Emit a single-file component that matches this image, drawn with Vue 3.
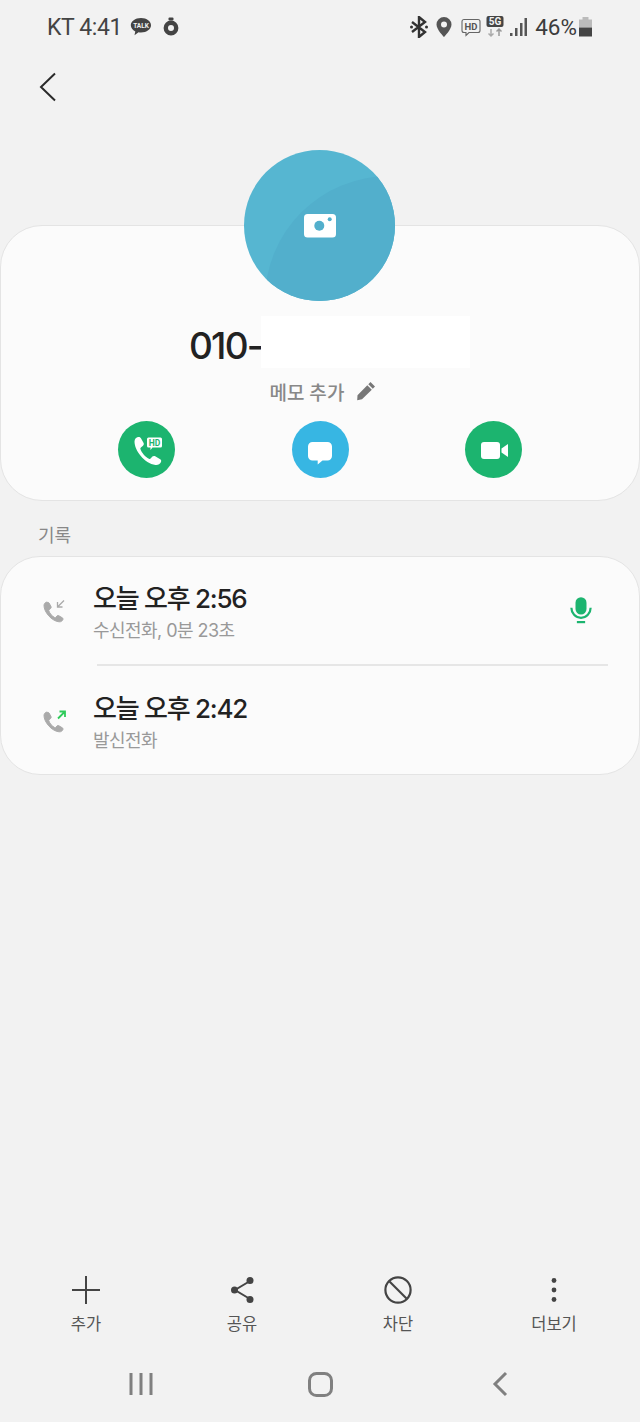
<template>
  <div class="phone">
    <header class="status">
      <div class="status-left">
        <span class="carrier">KT 4:41</span>
        <svg class="talk" width="22" height="20" viewBox="0 0 22 20">
          <path d="M11 1C5.200 1 .8 4.300 .8 8.300c0 2.600 1.800 4.800 4.500 6.100l-.8 3.800 4-2.900c.8.100 1.600.2 2.500.2 5.800 0 10-3.300 10-7.200S16.800 1 11 1z" fill="#444" />
          <text x="11" y="10.800" text-anchor="middle" class="talk-text">TALK</text>
        </svg>
        <svg class="timer" width="16" height="20" viewBox="0 0 16 20">
          <rect x="5.500" y="0.500" width="5" height="3" rx="1" fill="#444" />
          <circle cx="8" cy="11" r="5.200" fill="none" stroke="#444" stroke-width="4.400" />
        </svg>
      </div>
      <div class="status-right">
        <svg width="18" height="22" viewBox="0 0 18 22" fill="none" stroke="#333" stroke-width="2.400">
          <path d="M2 6l13 10-6 5V1l6 5L2 16" />
          <circle cx="1.500" cy="11" r="1.500" fill="#333" stroke="none" />
          <circle cx="16.500" cy="11" r="1.500" fill="#333" stroke="none" />
        </svg>
        <svg class="pin" width="16" height="20" viewBox="0 0 16 20">
          <path fill-rule="evenodd" d="M8 0a7.500 7.500 0 0 0-7.500 7.500C.5 12.500 8 20 8 20s7.500-7.500 7.500-12.500A7.500 7.500 0 0 0 8 0zm0 4.500a3 3 0 1 1 0 6 3 3 0 0 1 0-6z" fill="#555" />
        </svg>
        <svg class="hd" width="20" height="20" viewBox="0 0 20 20">
          <path d="M3 2.500h14a2 2 0 0 1 2 2v9a2 2 0 0 1-2 2H8l-3 3v-3H3a2 2 0 0 1-2-2v-9a2 2 0 0 1 2-2z" fill="none" stroke="#666" stroke-width="1.100" />
          <text x="10" y="12.500" text-anchor="middle" class="hd-text">HD</text>
        </svg>
        <svg class="five" width="18" height="22" viewBox="0 0 18 22">
          <rect x="0.500" y="0" width="17" height="11" rx="2" fill="#444" />
          <text x="9" y="9.300" text-anchor="middle" class="five-text">5G</text>
          <path d="M5 13v7M2.500 17.500L5 20l2.500-2.500" fill="none" stroke="#aaa" stroke-width="1.500" />
          <path d="M13 20v-7M10.500 15.500L13 13l2.500 2.500" fill="none" stroke="#999" stroke-width="1.500" />
        </svg>
        <svg class="signal" width="17" height="19" viewBox="0 0 17 19" fill="#555">
          <rect x="0" y="15" width="2.500" height="3" />
          <rect x="5" y="10" width="2.500" height="8" />
          <rect x="10" y="5" width="2.500" height="13" />
          <rect x="14.500" y="0" width="2.500" height="18" />
        </svg>
        <span class="percent">46%</span>
        <svg class="battery" width="13" height="20" viewBox="0 0 13 20">
          <rect x="3.500" y="0" width="6" height="3" fill="#bbb" />
          <rect x="0" y="2.500" width="13" height="8" fill="#bbb" />
          <rect x="0" y="10.500" width="13" height="9" fill="#444" />
        </svg>
      </div>
    </header>

    <button class="back">
      <svg width="18" height="30" viewBox="0 0 18 30" fill="none" stroke="#2a2a2a" stroke-width="2">
        <path d="M16 1.500L2 15l14 13.500" />
      </svg>
    </button>

    <section class="profile">
      <div class="avatar">
        <svg width="151" height="151" viewBox="0 0 151 151">
          <defs>
            <clipPath id="avatar-clip">
              <circle cx="75.500" cy="75.500" r="75.500" />
            </clipPath>
          </defs>
          <circle cx="75.500" cy="75.500" r="75.500" fill="#56b6d1" />
          <circle cx="145" cy="150" r="124" fill="#52afcc" clip-path="url(#avatar-clip)" />
          <rect x="60" y="64" width="32" height="23.500" rx="3.500" fill="#fff" />
          <circle cx="75.300" cy="75.700" r="5" fill="#52afcc" />
          <circle cx="85.700" cy="69.300" r="2" fill="#52afcc" />
        </svg>
      </div>
      <div class="number">
        <span class="num-text">010-</span>
        <span class="mask"></span>
      </div>
      <div class="memo">
        <span>메모 추가</span>
        <svg width="20" height="20" viewBox="0 0 20 20" fill="#777">
          <path d="M14.500 1l4.500 4.500-2.200 2.200-4.500-4.500zM11.300 4.200l4.500 4.500-9.800 9.600-4.800 1 .3-5.100z" />
        </svg>
      </div>
      <div class="actions">
        <button class="round green">
          <svg width="56" height="56" viewBox="0 0 56 56">
            <path d="M19 15c-1.500.3-3.500 1.800-3.500 4.500 0 9 10 22 21 23.500 2.500.3 4.500-1 5.500-3 .5-1.200.2-2-.8-2.700l-5-3c-1-.6-2-.5-2.800.3l-1.800 2c-.5.500-1 .5-1.700.2-3.500-1.800-7.200-6-8.500-9.800-.2-.7 0-1.200.5-1.600l2.100-1.700c.8-.7 1-1.700.6-2.700l-2.800-5c-.5-.8-1.500-1.300-2.800-1z" fill="#fff" />
            <path d="M29.500 15.500h12a1.500 1.500 0 0 1 1.500 1.500v7a1.500 1.500 0 0 1-1.500 1.500h-8l-2 2.500v-2.500h-2a1.500 1.500 0 0 1-1.500-1.500v-7a1.500 1.500 0 0 1 1.500-1.500z" fill="#fff" />
            <text x="35.500" y="23.800" text-anchor="middle" class="hd-badge">HD</text>
          </svg>
        </button>
        <button class="round blue">
          <svg width="56" height="56" viewBox="0 0 56 56">
            <path d="M20.500 20h15a4.500 4.500 0 0 1 4.500 4.500v9.500a4.500 4.500 0 0 1-4.500 4.500h-5l-4.800 4v-4h-5.200a4.500 4.500 0 0 1-4.500-4.500v-9.500a4.500 4.500 0 0 1 4.500-4.500z" fill="#fff" />
          </svg>
        </button>
        <button class="round green">
          <svg width="56" height="56" viewBox="0 0 56 56">
            <rect x="15" y="20" width="19" height="17" rx="3" fill="#fff" />
            <path d="M35.500 26.500l6.500-4.500v13L35.500 30.500z" fill="#fff" />
          </svg>
        </button>
      </div>
    </section>

    <div class="log-label">기록</div>

    <section class="log">
      <div v-for="(call, i) in calls" :key="call.time" class="log-row" :class="{ first: i === 0 }">
        <svg class="call-icon" width="26" height="26" viewBox="0 0 26 26">
          <path d="M5 5c-1.500.3-3 1.600-3 3.500 0 6.500 7.500 15.500 15 16.300 2 .2 3.300-.8 3.900-2.200.3-.8.100-1.300-.6-1.800l-3.400-2c-.7-.4-1.300-.3-1.900.2l-1.200 1.400c-.4.300-.7.300-1.200.1-2.400-1.200-4.900-4.100-5.800-6.700-.1-.5 0-.8.400-1.100l1.400-1.200c.6-.5.700-1.200.4-1.900l-1.900-3.500c-.4-.6-1-.9-2-.8z" fill="#aaa" stroke="#aaa" stroke-width="1" />
          <path v-if="call.out" d="M16 11.500L23 4.500M17.500 4.500h5.500V10" fill="none" stroke="#2ecb5a" stroke-width="1.800" />
          <path v-else d="M22 3.500L15.500 10M15.500 5v5h5" fill="none" stroke="#aaa" stroke-width="1.300" />
        </svg>
        <div class="log-text">
          <div class="log-time">{{ call.time }}</div>
          <div class="log-sub">{{ call.sub }}</div>
        </div>
        <svg v-if="call.rec" class="mic" width="22" height="28" viewBox="0 0 24 30">
          <rect x="6" y="1" width="12" height="19" rx="6" fill="#1cb46f" />
          <path d="M1.500 12.500c0 6 4.500 11 10.500 11s10.500-5 10.500-11" fill="none" stroke="#1cb46f" stroke-width="2.400" />
          <rect x="7.500" y="27" width="9" height="2.400" fill="#1cb46f" />
        </svg>
      </div>
    </section>

    <nav class="tools">
      <div class="tool">
        <svg width="30" height="30" viewBox="0 0 30 30" stroke="#444" stroke-width="2" fill="none">
          <path d="M15 1v28M1 15h28" />
        </svg>
        <span>추가</span>
      </div>
      <div class="tool">
        <svg width="30" height="30" viewBox="0 0 30 30" fill="#444" stroke="#444">
          <path d="M23 6L8 15l15 9" fill="none" stroke-width="2" />
          <circle cx="23" cy="5.500" r="3.500" stroke="none" />
          <circle cx="7.500" cy="15" r="3.500" stroke="none" />
          <circle cx="23" cy="24.500" r="3.500" stroke="none" />
        </svg>
        <span>공유</span>
      </div>
      <div class="tool">
        <svg width="30" height="30" viewBox="0 0 30 30" fill="none" stroke="#444" stroke-width="2.200">
          <circle cx="15" cy="15" r="12.600" />
          <path d="M6.500 6.500l17 17" />
        </svg>
        <span>차단</span>
      </div>
      <div class="tool">
        <svg width="30" height="30" viewBox="0 0 30 30" fill="#444">
          <circle cx="15" cy="5.500" r="2.400" />
          <circle cx="15" cy="15" r="2.400" />
          <circle cx="15" cy="24.500" r="2.400" />
        </svg>
        <span>더보기</span>
      </div>
    </nav>

    <footer class="nav">
      <svg class="recents" width="24" height="24" viewBox="0 0 24 24" fill="#808080">
        <rect x="0.500" y="1" width="3" height="22" />
        <rect x="10.500" y="1" width="3" height="22" />
        <rect x="20.500" y="1" width="3" height="22" />
      </svg>
      <svg width="25" height="25" viewBox="0 0 25 25" fill="none" stroke="#808080" stroke-width="3">
        <rect x="1.500" y="1.500" width="22" height="22" rx="7" />
      </svg>
      <svg width="16" height="26" viewBox="0 0 16 26" fill="none" stroke="#808080" stroke-width="3">
        <path d="M14 2L3 13l11 11" />
      </svg>
    </footer>
  </div>
</template>

<script setup>
const calls = [
  { time: "오늘 오후 2:56", sub: "수신전화, 0분 23초", out: false, rec: true },
  { time: "오늘 오후 2:42", sub: "발신전화", out: true, rec: false }
];
</script>

<style scoped>
.phone {
  width: 640px;
  height: 1422px;
  background: #f2f2f2;
  display: flex;
  flex-direction: column;
  font-family: "Noto Sans CJK KR", "Noto Sans", sans-serif;
  overflow: hidden;
}

.status {
  height: 54px;
  padding: 0 48px 0 47px;
  display: flex;
  align-items: center;
  justify-content: space-between;
}

.status-left,
.status-right {
  display: flex;
  align-items: center;
}

.carrier {
  font-family: "Roboto", sans-serif;
  font-size: 23px;
  letter-spacing: -0.400px;
  color: #444;
  margin-right: 8px;
}

.timer {
  margin-left: 11px;
}

.talk-text {
  font: 700 6.500px "Roboto", sans-serif;
  fill: #f2f2f2;
}

.hd-text {
  font: 700 9.500px "Roboto", sans-serif;
  fill: #555;
}

.five-text {
  font: 700 10px "Roboto", sans-serif;
  fill: #f2f2f2;
}

.hd-badge {
  font: 700 8.500px "Roboto", sans-serif;
  fill: #1cb46f;
}

.pin {
  margin-left: 8px;
}

.hd {
  margin-left: 9px;
}

.five {
  margin-left: 5px;
}

.signal {
  margin-left: 6px;
}

.percent {
  font-family: "Roboto", sans-serif;
  font-size: 22.500px;
  color: #3c3c3c;
  margin-left: 8px;
  margin-right: 2px;
}

.back {
  align-self: flex-start;
  margin: 18px 0 0 39px;
  padding: 0;
  border: none;
  background: none;
  height: 30px;
  display: block;
}

.profile {
  margin-top: 123px;
  height: 276px;
  box-sizing: border-box;
  background: #fbfbfb;
  border: 1px solid #e4e4e4;
  border-radius: 42px;
  display: flex;
  flex-direction: column;
  align-items: center;
}

.avatar {
  margin-top: -76px;
  margin-left: -2px;
  height: 151px;
}

.avatar svg {
  display: block;
}

.number {
  margin-top: 15px;
  height: 52px;
  display: flex;
  align-items: center;
  margin-left: 20px;
  width: 282px;
}

.num-text {
  font-family: "Inter", "Noto Sans CJK KR", sans-serif;
  font-size: 37px;
  font-weight: 500;
  letter-spacing: -1.800px;
  color: #222;
  width: 72px;
  padding-top: 6px;
}

.mask {
  width: 209px;
  height: 52px;
  background: #fff;
}

.memo {
  margin-top: 8px;
  height: 30px;
  display: flex;
  align-items: center;
  gap: 11px;
  font-size: 19px;
  font-weight: 500;
  letter-spacing: 0.200px;
  color: #888;
  margin-left: 5px;
}

.actions {
  margin-top: 15px;
  width: 404px;
  display: flex;
  justify-content: space-between;
}

.round {
  width: 57px;
  height: 57px;
  padding: 0;
  border: none;
  border-radius: 50%;
  display: flex;
  align-items: center;
  justify-content: center;
}

.green {
  background: #1cb46f;
}

.blue {
  background: #37b6e3;
}

.log-label {
  margin: 20px 0 0 38px;
  height: 26px;
  line-height: 26px;
  font-size: 18px;
  color: #888;
}

.log {
  margin-top: 9px;
  height: 219px;
  box-sizing: border-box;
  background: #fbfbfb;
  border: 1px solid #e4e4e4;
  border-radius: 40px;
}

.log-row {
  height: 108px;
  padding: 0 47px 0 41px;
  display: flex;
  align-items: center;
  position: relative;
}

.log-row.first {
  height: 109px;
  box-sizing: border-box;
  padding-bottom: 3px;
}

.log-row.first::after {
  content: "";
  position: absolute;
  left: 96px;
  right: 31px;
  bottom: 0;
  height: 2px;
  background: #e6e6e6;
}

.call-icon {
  flex: none;
}

.log-text {
  margin-left: 25px;
  padding-top: 4px;
  flex: 1;
}

.log-time {
  font-family: "Inter", "Noto Sans CJK KR", sans-serif;
  font-size: 26px;
  line-height: 36px;
  font-weight: 500;
  color: #222;
  letter-spacing: -1.250px;
}

.log-sub {
  font-family: "Inter", "Noto Sans CJK KR", sans-serif;
  font-size: 18px;
  line-height: 27px;
  color: #999;
  letter-spacing: -0.550px;
}

.tools {
  margin-top: auto;
  height: 70px;
  padding: 0 8px;
  display: grid;
  grid-template-columns: repeat(4, 156px);
}

.tool {
  display: flex;
  flex-direction: column;
  align-items: center;
  gap: 6px;
  font-size: 16.500px;
  line-height: 24px;
  color: #555;
}

.tool svg {
  display: block;
}

.nav {
  margin-top: 26px;
  margin-bottom: 25px;
  height: 26px;
  display: grid;
  grid-template-columns: repeat(3, 180px);
  justify-content: center;
  justify-items: center;
  align-items: center;
}

.recents {
  margin-left: 2px;
}
</style>

<style>
html,
body {
  margin: 0;
  background: #f2f2f2;
}
</style>
